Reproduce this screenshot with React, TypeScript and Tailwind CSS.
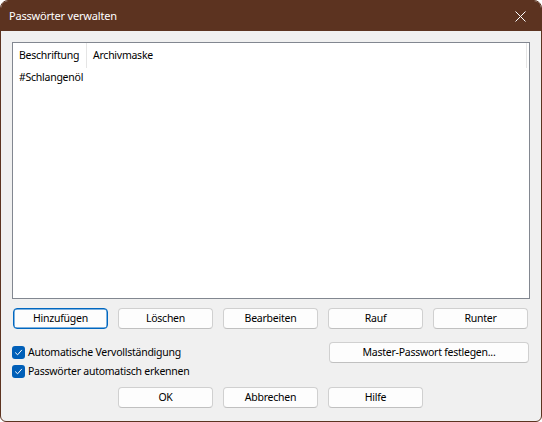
import React from 'react'

const font = { fontFamily: '"Noto Sans", "Segoe UI", sans-serif' }

function Btn({ label, w = 'w-[95px]', focused = false }: { label: string; w?: string; focused?: boolean }) {
  return (
    <button
      className={`${w} h-[21px] rounded-[4px] bg-[#fdfdfd] text-[10.5px] tracking-[-0.25px] leading-none text-black flex items-center justify-center ${
        focused ? 'border border-[#0067c0] shadow-[inset_0_0_0_0.5px_#0067c0]' : 'border border-[#d0d0d0] border-b-[#c0c0c0]'
      }`}
    >
      {label}
    </button>
  )
}

function Check({ label }: { label: string }) {
  return (
    <label className="flex items-center gap-[3px] h-[19px]">
      <span className="w-[13px] h-[13px] rounded-[3px] bg-[#005fb8] flex items-center justify-center">
        <svg width="9" height="9" viewBox="0 0 9 9" fill="none">
          <path d="M1.5 4.8 L3.6 6.8 L7.6 2.2" stroke="white" strokeWidth="1" strokeLinecap="round" strokeLinejoin="round" />
        </svg>
      </span>
      <span className="text-[10.5px] tracking-[-0.25px] text-black">{label}</span>
    </label>
  )
}

export default function App() {
  return (
    <div style={font} className="w-[542px] h-[422px] rounded-t-[8px] rounded-b-[6px] overflow-hidden border border-[#5c3320] bg-[#f0f0f0] flex flex-col">
      {/* title bar */}
      <div className="h-[30px] bg-[#5c3320] flex items-center justify-between pl-[8px] pr-[15px] shrink-0">
        <span className="text-[11px] tracking-[-0.2px] text-white">Passwörter verwalten</span>
        <svg width="11" height="11" viewBox="0 0 11 11">
          <path d="M0.5 0.5 L10.5 10.5 M10.5 0.5 L0.5 10.5" stroke="white" strokeWidth="1" />
        </svg>
      </div>

      <div className="flex-1 pt-[11px] px-[11px] flex flex-col">
        {/* list */}
        <div className="w-[518px] h-[257px] border border-[#828790] bg-white flex flex-col">
          <div className="flex h-[25px] text-[10.5px] tracking-[-0.25px] text-black">
            <div className="w-[74px] pl-[6px] flex items-center border-r border-[#e5e5e5]">Beschriftung</div>
            <div className="w-[440px] pl-[6px] flex items-center border-r border-[#e5e5e5]">Archivmaske</div>
          </div>
          <div className="h-[20px] pl-[6px] flex items-center text-[10.5px] tracking-[-0.25px] text-black">#Schlangenöl</div>
        </div>

        {/* action buttons */}
        <div className="flex gap-[10px] mt-[9px] pl-[1px]">
          <Btn label="Hinzufügen" focused />
          <Btn label="Löschen" />
          <Btn label="Bearbeiten" />
          <Btn label="Rauf" />
          <Btn label="Runter" />
        </div>

        {/* options */}
        <div className="flex justify-between mt-[13px]">
          <div className="flex flex-col pt-[1px]">
            <Check label="Automatische Vervollständigung" />
            <Check label="Passwörter automatisch erkennen" />
          </div>
          <div className="pr-[1px]">
            <Btn label="Master-Passwort festlegen..." w="w-[200px]" />
          </div>
        </div>

        {/* dialog buttons */}
        <div className="flex gap-[10px] mt-[6px] pl-[106px]">
          <Btn label="OK" />
          <Btn label="Abbrechen" />
          <Btn label="Hilfe" />
        </div>
      </div>
    </div>
  )
}
